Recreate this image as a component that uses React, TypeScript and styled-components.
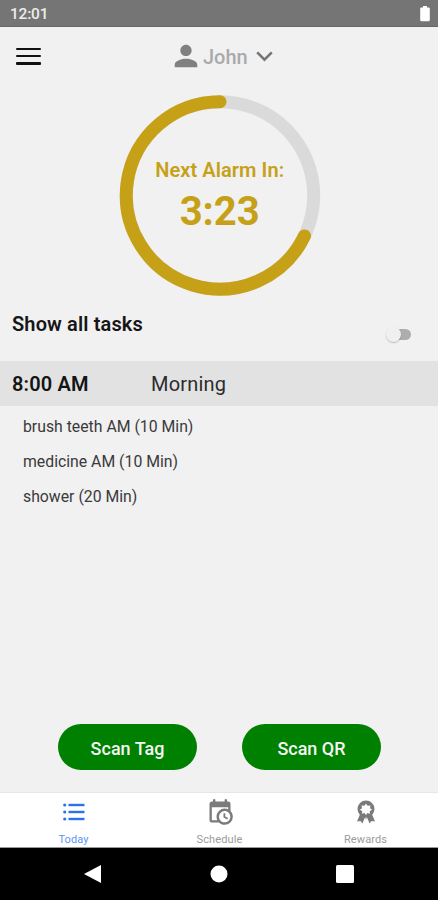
import React from 'react';
import styled, { createGlobalStyle } from 'styled-components';
import { IoMdPerson } from 'react-icons/io';

const GlobalStyle = createGlobalStyle`
  *, *::before, *::after { box-sizing: border-box; }
  body { margin: 0; background: #f1f1f1; font-family: Roboto, "Liberation Sans", sans-serif; }
  button { font: inherit; border: 0; padding: 0; background: none; cursor: pointer; }
  svg { display: block; flex: none; }
`;

const Screen = styled.div`
  width: 438px;
  height: 900px;
  display: flex;
  flex-direction: column;
  overflow: hidden;
  background: #f1f1f1;
`;

const StatusBar = styled.div`
  height: 27px;
  flex: none;
  display: flex;
  align-items: center;
  justify-content: space-between;
  padding: 2px 8px 0 10px;
  background: #757575;
  border-bottom: 1px solid #686868;
  color: #ececec;
  font-size: 15.5px;
  font-weight: 500;
  line-height: 20px;
  letter-spacing: -0.2px;
`;

const Header = styled.header`
  height: 59px;
  flex: none;
  display: grid;
  grid-template-columns: 60px 1fr 60px;
  align-items: center;
  padding: 0 0 1px 16px;
`;

const MenuButton = styled.button`
  width: 25px;
  height: 17px;
  display: flex;
  flex-direction: column;
  justify-content: space-between;
`;

const MenuLine = styled.span`
  height: 2.5px;
  border-radius: 1px;
  background: #111;
`;

const Profile = styled.button`
  display: flex;
  align-items: center;
  justify-self: start;
  margin-left: 95px;
  color: #808080;
`;

const ProfileName = styled.span`
  margin: 1px 8px 0 2px;
  color: #aaa;
  font-size: 20px;
  font-weight: 500;
  line-height: 24px;
`;

const Timer = styled.section`
  width: 202px;
  height: 202px;
  flex: none;
  display: grid;
  margin: 8px 0 0 118.7px;
  & > * { grid-area: 1 / 1; }
`;

const TimerText = styled.div`
  display: flex;
  flex-direction: column;
  align-items: center;
  padding-top: 63.5px;
  color: #c6a117;
`;

const TimerLabel = styled.div`
  font-size: 20px;
  line-height: 24px;
  font-weight: 600;
  letter-spacing: 0.08px;
  white-space: nowrap;
`;

const TimerValue = styled.div`
  margin-top: 6px;
  font-size: 40px;
  font-weight: 700;
  line-height: 48px;
`;

const Filter = styled.div`
  height: 65px;
  flex: none;
  display: flex;
  justify-content: space-between;
  align-items: flex-start;
  padding: 16px 26px 0 12px;
`;

const FilterLabel = styled.label`
  font-size: 20px;
  font-weight: 600;
  line-height: 24px;
  letter-spacing: 0.13px;
  color: #161616;
`;

const Toggle = styled.button`
  width: 26px;
  height: 16px;
  display: flex;
  align-items: center;
  margin-top: 14px;
`;

const ToggleTrack = styled.span`
  width: 20px;
  height: 11px;
  margin-left: 5px;
  border-radius: 6px;
  background: #adadad;
  display: flex;
  align-items: center;
`;

const ToggleThumb = styled.span`
  width: 15px;
  height: 15px;
  flex: none;
  margin-left: -5px;
  border-radius: 50%;
  background: #f0f0f0;
  box-shadow: 0 1px 1.5px rgba(0, 0, 0, 0.22);
`;

const GroupHeader = styled.div`
  height: 45px;
  flex: none;
  display: grid;
  grid-template-columns: 139px 1fr;
  align-items: center;
  padding: 1px 0 0 12px;
  background: #e2e2e2;
  font-size: 20px;
  line-height: 24px;
  letter-spacing: 0.2px;
  color: #2c2c2c;
`;

const GroupTime = styled.span`
  font-weight: 600;
  letter-spacing: 0.15px;
  color: #141414;
`;

const TaskList = styled.ul`
  flex: 1;
  margin: 0;
  padding: 4px 0 0 23px;
  list-style: none;
`;

const Task = styled.li`
  height: 34.8px;
  line-height: 34.8px;
  font-size: 15.8px;
  color: #3a3a3a;
`;

const Actions = styled.div`
  display: flex;
  flex: none;
  gap: 45px;
  padding: 0 57px 22px 58px;
`;

const ScanButton = styled.button`
  && {
    width: 139px;
    height: 46px;
    padding-top: 2px;
    border-radius: 23px;
    background: #008000;
    color: #f5f5f5;
    font-size: 18px;
    font-weight: 500;
  }
`;

const Tabs = styled.nav`
  height: 56px;
  flex: none;
  display: grid;
  grid-template-columns: repeat(3, 146px);
  padding-left: 0.5px;
  background: #fff;
  border-top: 1px solid #e6e6e6;
  border-bottom: 1px solid #999;
`;

const Tab = styled.a<{ $active?: boolean }>`
  display: flex;
  flex-direction: column;
  align-items: center;
  padding-top: 5px;
  color: ${(p) => (p.$active ? '#2874f0' : '#7b7b7b')};
`;

const TabIcon = styled.span`
  width: 28px;
  height: 28px;
  display: grid;
  place-items: center;
`;

const TabLabel = styled.span<{ $active?: boolean }>`
  margin-top: 7px;
  font-size: 11px;
  line-height: 13px;
  letter-spacing: 0.1px;
  color: ${(p) => (p.$active ? '#5f94f6' : '#9b9b9b')};
`;

const SystemBar = styled.div`
  height: 52px;
  flex: none;
  display: grid;
  grid-template-columns: repeat(3, 126px);
  justify-content: center;
  justify-items: center;
  align-items: center;
  background: #000;
`;

const ChevronIcon = () => (
  <svg width="17" height="11" viewBox="0 0 17 11" fill="none" stroke="#757575" strokeWidth="2.6">
    <path d="M1.2 1.3 8.5 8.6l7.3-7.3" />
  </svg>
);

const ListIcon = () => (
  <svg width="22" height="18" viewBox="0 0 22 18" fill="currentColor">
    {[2, 9, 16].map((y) => (
      <g key={y}>
        <circle cx="1.7" cy={y} r="1.6" />
        <rect x="5.5" y={y - 1.2} width="16" height="2.4" />
      </g>
    ))}
  </svg>
);

const CalendarClockIcon = () => (
  <svg width="28" height="28" viewBox="0 0 24 24" fill="currentColor">
    <path d="M15 13h1.5v2.82l2.44 1.41-.75 1.3L15 16.69V13m4-5H5v11h4.67c-.43-.91-.67-1.93-.67-3a7 7 0 0 1 7-7c1.07 0 2.09.24 3 .67V8M5 21a2 2 0 0 1-2-2V5c0-1.11.89-2 2-2h1V1h2v2h8V1h2v2h1a2 2 0 0 1 2 2v6.1c1.24 1.26 2 2.99 2 4.9a7 7 0 0 1-7 7c-1.91 0-3.64-.76-4.9-2H5m11-9.85A4.85 4.85 0 0 0 11.15 16c0 2.68 2.17 4.85 4.85 4.85A4.85 4.85 0 0 0 20.85 16c0-2.68-2.17-4.85-4.85-4.85z" />
  </svg>
);

const RibbonIcon = () => (
  <svg width="20" height="24" viewBox="0 0 20 24" fill="currentColor">
    <path d="M4 14.2 1 21.6l3.5-.6 1.9 2.6 3.1-7.4zM16 14.2l3 7.4-3.5-.6-1.9 2.6-3.1-7.4z" />
    <path
      fillRule="evenodd"
      d="M10 .6a8.5 8.5 0 1 1 0 17 8.5 8.5 0 0 1 0-17zm0 3.1L8.3 5.8 5.6 5.5 6 8.2 3.8 9.8l2.4 1.3-.1 2.7 2.6-.7L10 15.3l1.3-2.2 2.6.7-.1-2.7 2.4-1.3L14 8.2l.4-2.7-2.7.3z"
    />
    <path d="m9.2 16.2.8 4 .8-4z" />
  </svg>
);

const tasks = ['brush teeth AM (10 Min)', 'medicine AM (10 Min)', 'shower (20 Min)'];

const tabs = [
  { label: 'Today', icon: <ListIcon />, active: true },
  { label: 'Schedule', icon: <CalendarClockIcon /> },
  { label: 'Rewards', icon: <RibbonIcon /> },
];

export default function App() {
  return (
    <>
      <GlobalStyle />
      <Screen>
        <StatusBar>
          <span>12:01</span>
          <svg width="10" height="16" viewBox="0 0 10 16" fill="#fff">
            <path d="M3 0h4v1.5h1.6c.7 0 1.2.5 1.2 1.2v11.4c0 .7-.5 1.2-1.2 1.2H1.4c-.7 0-1.2-.5-1.2-1.2V2.7c0-.7.5-1.2 1.2-1.2H3z" />
          </svg>
        </StatusBar>
        <Header>
          <MenuButton aria-label="Menu">
            <MenuLine />
            <MenuLine />
            <MenuLine />
          </MenuButton>
          <Profile>
            <IoMdPerson size={30} />
            <ProfileName>John</ProfileName>
            <ChevronIcon />
          </Profile>
        </Header>
        <Timer>
          <svg width="202" height="202" viewBox="-101 -101.4 202 202" fill="none" strokeWidth="13">
            <circle r="93.7" stroke="#dadada" />
            <path d="M84.5 40.5A93.7 93.7 0 1 1 0 -93.7" stroke="#c6a117" strokeLinecap="round" />
          </svg>
          <TimerText>
            <TimerLabel>Next Alarm In:</TimerLabel>
            <TimerValue>3:23</TimerValue>
          </TimerText>
        </Timer>
        <Filter>
          <FilterLabel>Show all tasks</FilterLabel>
          <Toggle role="switch" aria-checked="false" aria-label="Show all tasks">
            <ToggleTrack>
              <ToggleThumb />
            </ToggleTrack>
          </Toggle>
        </Filter>
        <GroupHeader>
          <GroupTime>8:00 AM</GroupTime>
          <span>Morning</span>
        </GroupHeader>
        <TaskList>
          {tasks.map((t) => (
            <Task key={t}>{t}</Task>
          ))}
        </TaskList>
        <Actions>
          <ScanButton>Scan Tag</ScanButton>
          <ScanButton>Scan QR</ScanButton>
        </Actions>
        <Tabs>
          {tabs.map((t) => (
            <Tab key={t.label} $active={t.active}>
              <TabIcon>{t.icon}</TabIcon>
              <TabLabel $active={t.active}>{t.label}</TabLabel>
            </Tab>
          ))}
        </Tabs>
        <SystemBar>
          <svg width="18" height="20" viewBox="0 0 18 20" fill="#fff">
            <path d="M0 10 17 1v18z" />
          </svg>
          <svg width="18" height="18" viewBox="0 0 18 18" fill="#fff">
            <circle cx="9" cy="9" r="8.5" />
          </svg>
          <svg width="18" height="18" viewBox="0 0 18 18" fill="#fff">
            <rect width="18" height="18" rx="1.5" />
          </svg>
        </SystemBar>
      </Screen>
    </>
  );
}
